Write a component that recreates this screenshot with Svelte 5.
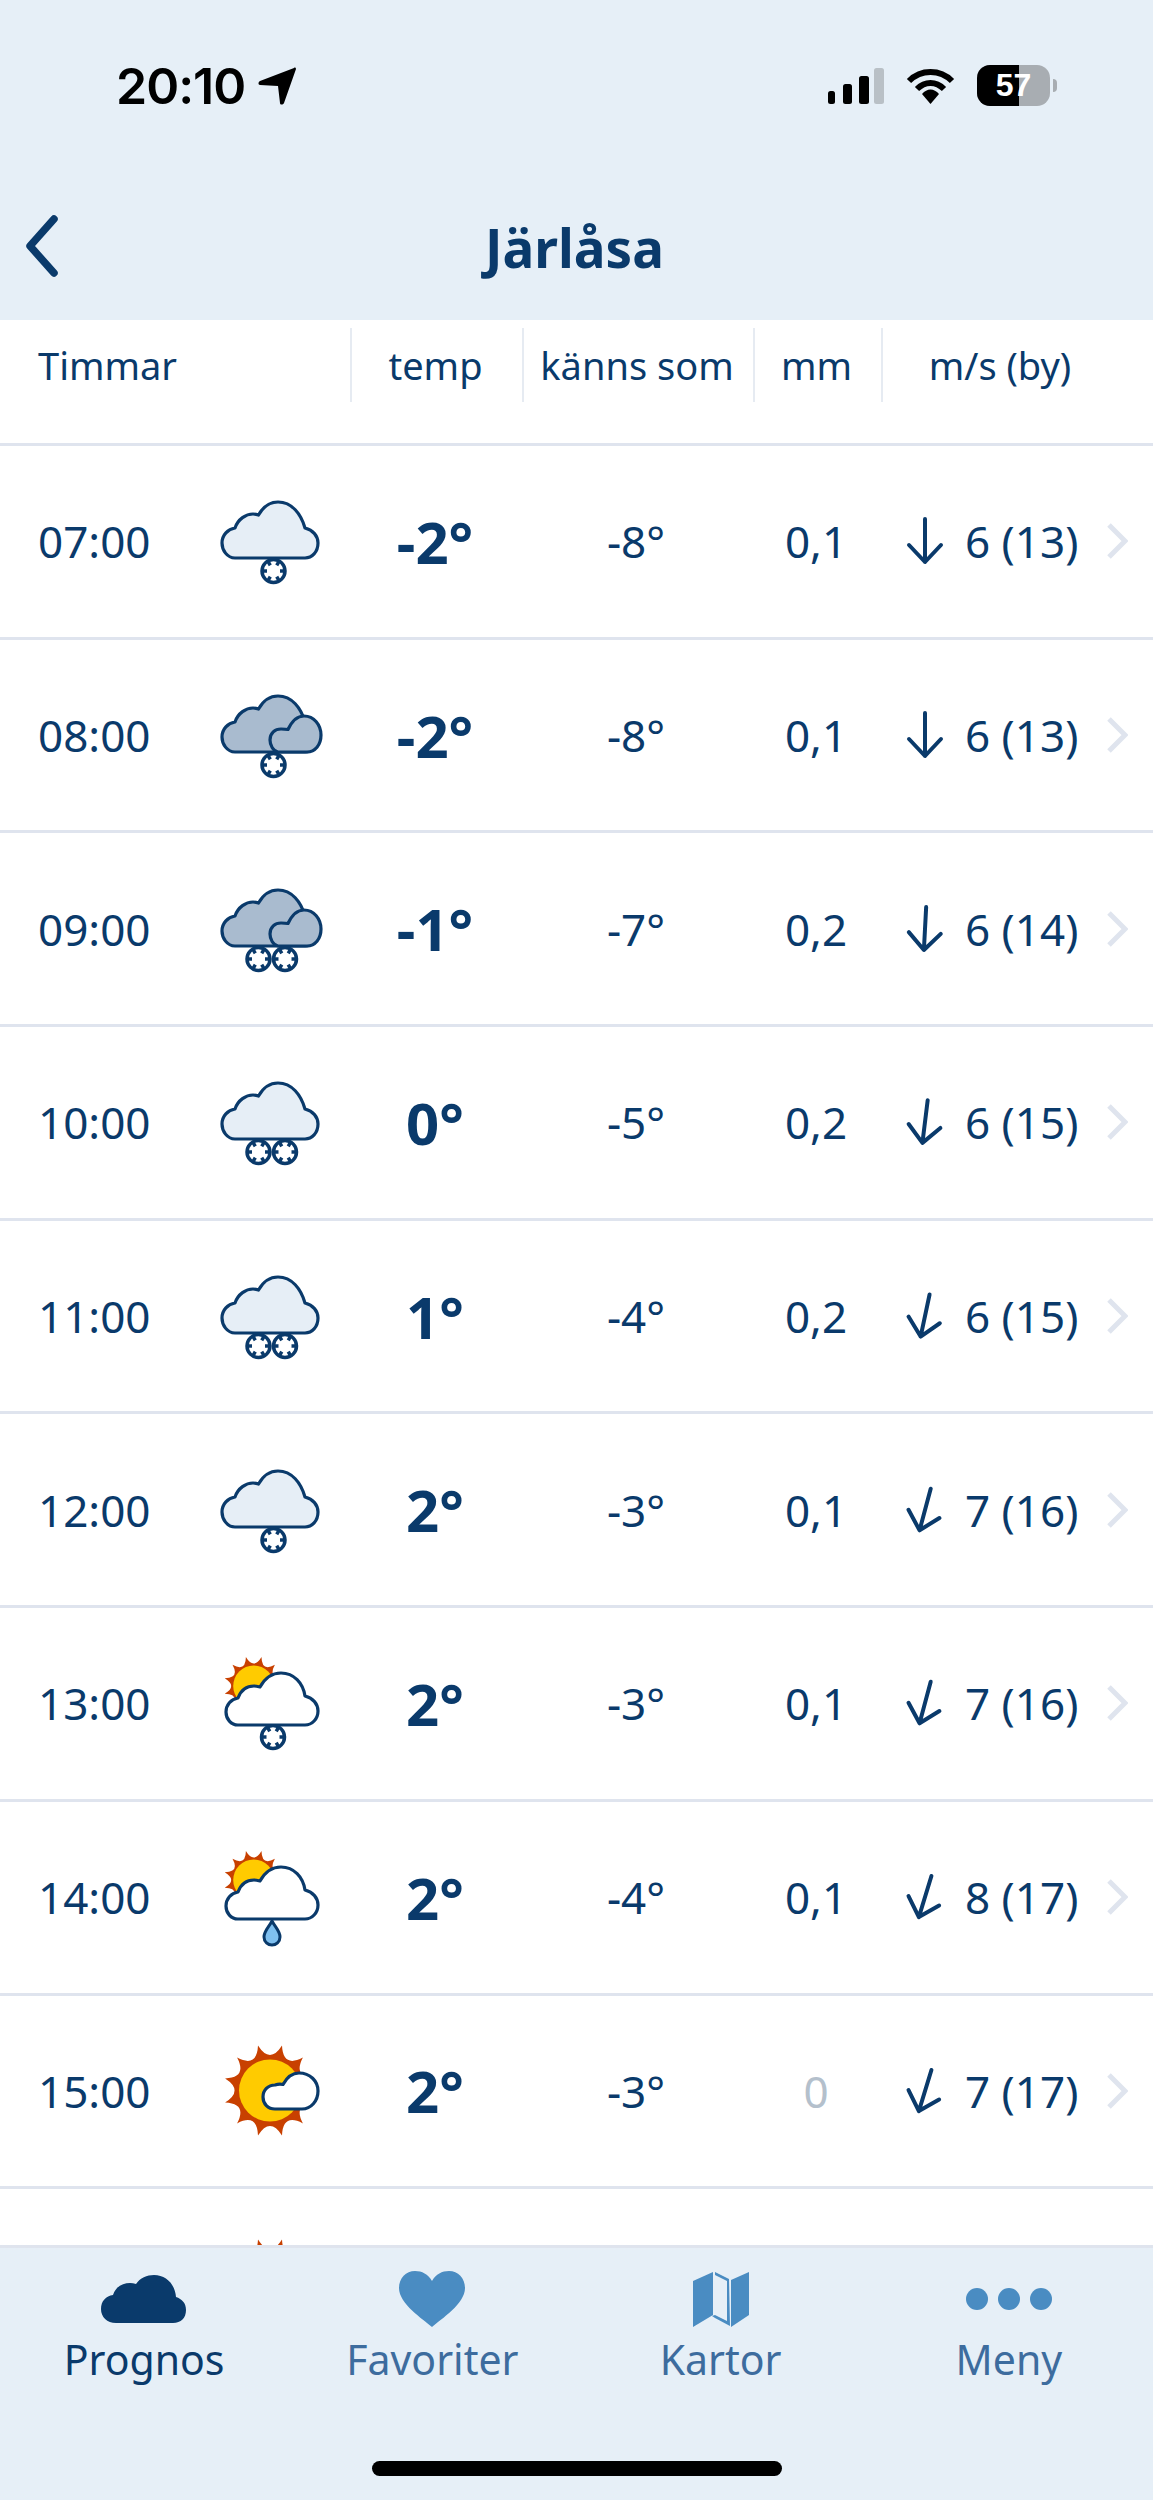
<script lang="ts">
  const hours = [
    { time: '07:00', icon: 'snow', temp: '-2°', feels: '-8°', mm: '0,1', dir: 0, wind: '6 (13)' },
    { time: '08:00', icon: 'darkSnow', temp: '-2°', feels: '-8°', mm: '0,1', dir: 0, wind: '6 (13)' },
    { time: '09:00', icon: 'darkSnow2', temp: '-1°', feels: '-7°', mm: '0,2', dir: 3, wind: '6 (14)' },
    { time: '10:00', icon: 'snow2', temp: '0°', feels: '-5°', mm: '0,2', dir: 7, wind: '6 (15)' },
    { time: '11:00', icon: 'snow2', temp: '1°', feels: '-4°', mm: '0,2', dir: 12, wind: '6 (15)' },
    { time: '12:00', icon: 'snow', temp: '2°', feels: '-3°', mm: '0,1', dir: 15, wind: '7 (16)' },
    { time: '13:00', icon: 'sunSnow', temp: '2°', feels: '-3°', mm: '0,1', dir: 15, wind: '7 (16)' },
    { time: '14:00', icon: 'sunRain', temp: '2°', feels: '-4°', mm: '0,1', dir: 17, wind: '8 (17)' },
    { time: '15:00', icon: 'sun', temp: '2°', feels: '-3°', mm: '0', dir: 17, wind: '7 (17)' },
    // only the top of this row's icon shows above the tab bar
    { time: '', icon: 'sun', temp: '', feels: '', mm: '', dir: 0, wind: '' },
  ];

  const tabs = ['Prognos', 'Favoriter', 'Kartor', 'Meny'];

  const bigCloud = 'M25 77C17 77 12 69 12 62C12 54 18 48 25 47C28 38 36 33 43 33C45 33 47 33.5 48.5 34C53 26 60 21 68 21C82 21 91 33 95 47C103 49 108 55 108 62C108 71 102 77 95 77Z';
  const frontCloud = 'M68 77C63 76 60 70 60 65C60 58 65 54 71 54C74 54 76 54 78 54.5C82 46 87 41 94 41C104 41 111 50 111 60C111 70 105 77 97 77Z';
  const flatCloud = 'M28 82C21 82 16 76 16 69C16 62 21 56 28 55C31 47 37 43 44 43C46 43 48 43.5 50 44C55 35 62 30 71 30C84 30 93 40 95 53C103 55 108 61 108 68C108 76 102 82 95 82Z';
  const smallCloud = 'M65 78C58 78 53 73 53 66C53 59 58 54 65 54C68 53 71 53 73 53.5C77 46 82 42 89 42C100 42 108 50 108 60C108 70 101 78 92 78Z';

  // sun outline with twelve concave rays
  function sunPath(cx: number, cy: number, outer: number, inner: number) {
    let d = '';
    for (let i = 0; i < 12; i++) {
      const a = ((15 + i * 30 - 90) * Math.PI) / 180;
      const m = a + Math.PI / 12;
      const tip = `${(cx + outer * Math.cos(a)).toFixed(1)} ${(cy + outer * Math.sin(a)).toFixed(1)}`;
      const ctl = `${(cx + inner * Math.cos(m)).toFixed(1)} ${(cy + inner * Math.sin(m)).toFixed(1)}`;
      const next = a + Math.PI / 6;
      const end = `${(cx + outer * Math.cos(next)).toFixed(1)} ${(cy + outer * Math.sin(next)).toFixed(1)}`;
      d += (i === 0 ? `M${tip}` : '') + `Q${ctl} ${end}`;
    }
    return d + 'Z';
  }

  const spokes = [0, 60, 120, 180, 240, 300];
</script>

{#snippet flake(x: number, y: number)}
  <circle cx={x} cy={y} r="11.5" fill="#fff" stroke="#0a3a6b" stroke-width="3.5" />
  {#each spokes as s}
    <line
      x1={x + 11 * Math.cos((s * Math.PI) / 180)}
      y1={y + 11 * Math.sin((s * Math.PI) / 180)}
      x2={x + 6.5 * Math.cos((s * Math.PI) / 180)}
      y2={y + 6.5 * Math.sin((s * Math.PI) / 180)}
      stroke="#0a3a6b"
      stroke-width="3.5"
    />
  {/each}
{/snippet}

{#snippet weather(icon: string)}
  <svg class="wx" viewBox="0 0 120 120" width="120" height="120" stroke-linejoin="round">
    {#if icon === 'snow' || icon === 'snow2'}
      {#if icon === 'snow'}
        {@render flake(63.5, 90)}
      {:else}
        {@render flake(48.5, 90)}
        {@render flake(75, 90)}
      {/if}
      <path d={bigCloud} fill="#e6eef6" stroke="#0a3a6b" stroke-width="3.2" />
    {:else if icon === 'darkSnow' || icon === 'darkSnow2'}
      {#if icon === 'darkSnow'}
        {@render flake(63.5, 90)}
      {:else}
        {@render flake(48.5, 90)}
        {@render flake(75, 90)}
      {/if}
      <path d={bigCloud} fill="#a9bbcf" stroke="#0a3a6b" stroke-width="3.2" />
      <path d={frontCloud} fill="#a9bbcf" stroke="#0a3a6b" stroke-width="3.2" />
    {:else if icon === 'sunSnow' || icon === 'sunRain'}
      <path d={sunPath(43.7, 43, 30, 16)} fill="#c84000" />
      <circle cx="43.7" cy="43" r="20.5" fill="#ffcb00" />
      {#if icon === 'sunSnow'}
        {@render flake(63, 94)}
      {:else}
        <path d="M62 84C59 90 54 94 54 100C54 105 58 108 62 108C66 108 70 105 70 100C70 94 65 90 62 84Z" fill="#7fc0f0" stroke="#0a3a6b" stroke-width="3" />
      {/if}
      <path d={flatCloud} fill="#fff" stroke="#0a3a6b" stroke-width="3.2" />
    {:else}
      <path d={sunPath(60, 59.5, 46.5, 26)} fill="#c84000" />
      <circle cx="60" cy="59.5" r="31" fill="#ffcb00" />
      <path d={smallCloud} fill="#fff" stroke="#0a3a6b" stroke-width="3.2" />
    {/if}
  </svg>
{/snippet}

<div class="phone">
  <header class="top">
    <div class="status">
      <div class="clock">
        <span>20:10</span>
        <svg viewBox="0 0 38 38" width="38" height="38"><path d="M36 1C37 0 38 1 38 2L26 36C25 38 22 38 22 36L20 19L2 18C0 18 0 15 2 14Z" fill="#000" /></svg>
      </div>
      <div class="indicators">
        <svg viewBox="0 0 56 36" width="56" height="36">
          <rect x="0" y="23" width="7" height="13" rx="2.5" fill="#000" />
          <rect x="15" y="16" width="9" height="20" rx="2.5" fill="#000" />
          <rect x="31" y="8" width="10" height="28" rx="2.5" fill="#000" />
          <rect x="46" y="0" width="10" height="36" rx="2.5" fill="#b9c0c6" />
        </svg>
        <svg viewBox="0 0 49 36" width="49" height="36">
          <path d="M3 13C15 1 34 1 46 13" fill="none" stroke="#000" stroke-width="6" />
          <path d="M11 21C19 13 30 13 38 21" fill="none" stroke="#000" stroke-width="6" />
          <path d="M16 26C21 20 28 20 33 26L24.500 36Z" fill="#000" />
        </svg>
        <div class="battery">
          <div class="cell"><span class="fill"></span><span class="pct">57</span></div>
          <span class="tip"></span>
        </div>
      </div>
    </div>
    <div class="nav">
      <svg class="back" viewBox="0 0 36 62" width="36" height="62"><path d="M31 4L7 31L31 58" fill="none" stroke="#0a3a6b" stroke-width="7.5" stroke-linecap="round" stroke-linejoin="round" /></svg>
      <h1>Järlåsa</h1>
    </div>
  </header>

  <div class="table-head">
    <span class="h-hours">Timmar</span>
    <span class="h-col">temp</span>
    <span class="h-col">känns som</span>
    <span class="h-col">mm</span>
    <span class="h-col">m/s (by)</span>
  </div>

  <div class="list">
    {#each hours as h}
      <div class="row">
        <span class="time">{h.time}</span>
        {@render weather(h.icon)}
        <span class="temp">{h.temp}</span>
        <span class="feels">{h.feels}</span>
        <span class="mm" class:none={h.mm === '0'}>{h.mm}</span>
        <div class="wind">
          {#if h.wind}
            <svg viewBox="0 0 50 60" width="50" height="60" style="transform: rotate({h.dir}deg)">
              <path d="M25 8V51M9 34L25 51L41 34" fill="none" stroke="#0a3a6b" stroke-width="4" stroke-linecap="round" stroke-linejoin="round" />
            </svg>
            <span class="speed">{h.wind}</span>
            <svg class="chev" viewBox="0 0 22 38" width="22" height="38"><path d="M3 3L19 19L3 35" fill="none" stroke="#dfe4ee" stroke-width="5" /></svg>
          {/if}
        </div>
      </div>
    {/each}
  </div>

  <nav class="tabs">
    {#each tabs as t, i}
      <div class="tab" class:active={i === 0}>
        <div class="tab-icon">
          {#if i === 0}
            <svg viewBox="0 0 86 50" width="86" height="50"><path d="M15 49C6 49 0 43 0 35C0 27 5 22 12 21C15 12 22 9 29 9C31 9 33 9.500 35 10C39 4 46 1 53 1C65 1 74 10 75 23C81 25 85 29 85 36C85 44 80 49 72 49Z" fill="#0a3a6b" /></svg>
          {:else if i === 1}
            <svg viewBox="0 0 66 56" width="66" height="56"><path d="M33 56C24 48 0 33 0 17C0 7 7 0 16 0C23 0 29 3 33 10C37 3 43 0 50 0C59 0 66 7 66 17C66 33 42 48 33 56Z" fill="#4a8cc2" /></svg>
          {:else if i === 2}
            <svg viewBox="0 0 56 56" width="56" height="56"><path d="M0 10L20 1V44L0 56ZM22 1L36 8L37 55L22 47L19 45L22 44L34 50V10L22 4ZM38 9L56 1V44L38 56Z" fill="#4a8cc2" /></svg>
          {:else}
            <svg viewBox="0 0 86 22" width="86" height="22">
              <circle cx="11" cy="11" r="11" fill="#4a8cc2" />
              <circle cx="43" cy="11" r="11" fill="#4a8cc2" />
              <circle cx="75" cy="11" r="11" fill="#4a8cc2" />
            </svg>
          {/if}
        </div>
        <span class="tab-label">{t}</span>
      </div>
    {/each}
    <span class="home-bar"></span>
  </nav>
</div>

<style>
  :global(body) {
    margin: 0;
    background: #fff;
  }

  .phone {
    width: 1153px;
    height: 2500px;
    display: flex;
    flex-direction: column;
    overflow: hidden;
    font-family: 'Noto Sans', 'Open Sans', sans-serif;
    color: #0a3a6b;
  }

  .top {
    height: 320px;
    flex-shrink: 0;
    background: #e6eff7;
  }

  .status {
    display: flex;
    justify-content: space-between;
    align-items: center;
    height: 41px;
    padding: 65px 96px 0 116px;
  }

  .clock {
    display: flex;
    align-items: center;
    gap: 13px;
    font-family: Inter, 'Liberation Sans', sans-serif;
    font-weight: 600;
    font-size: 50px;
    letter-spacing: -1px;
    color: #000;
  }

  .indicators {
    display: flex;
    align-items: center;
    gap: 22px;
  }

  .battery {
    display: flex;
    align-items: center;
    gap: 3px;
  }

  .cell {
    position: relative;
    width: 73px;
    height: 41px;
    border-radius: 13px;
    background: #a8adb2;
    overflow: hidden;
    display: flex;
    align-items: center;
    justify-content: center;
  }

  .fill {
    position: absolute;
    left: 0;
    top: 0;
    bottom: 0;
    width: 42px;
    background: #000;
  }

  .pct {
    position: relative;
    font-family: 'Liberation Sans', sans-serif;
    font-weight: 700;
    font-size: 32px;
    color: #fff;
  }

  .tip {
    width: 4px;
    height: 13px;
    border-radius: 0 4px 4px 0;
    background: #a8adb2;
  }

  .nav {
    position: relative;
    display: flex;
    justify-content: center;
    margin-top: 107px;
    padding-right: 4px;
  }

  .back {
    position: absolute;
    left: 23px;
    top: 2px;
  }

  h1 {
    margin: 0;
    font-size: 53px;
    font-weight: 700;
    line-height: 70px;
  }

  .table-head {
    height: 123px;
    flex-shrink: 0;
    box-sizing: border-box;
    display: grid;
    grid-template-columns: 350px 172px 231px 128px 1fr;
    align-items: start;
    padding-top: 8px;
    font-size: 38px;
    background: #fff;
  }

  .table-head span {
    height: 74px;
    display: flex;
    align-items: center;
    justify-content: center;
    padding-right: 3px;
  }

  .table-head .h-hours {
    justify-content: flex-start;
    padding-left: 38px;
  }

  .h-col {
    border-left: 2px solid #e6ebf2;
  }

  .table-head .h-col:last-child {
    padding-right: 36px;
  }

  .list {
    flex: 1;
    min-height: 0;
    overflow: hidden;
    background: #fff;
  }

  .row {
    height: 193.7px;
    box-sizing: border-box;
    border-top: 3px solid #dfe4ee;
    display: grid;
    grid-template-columns: 210px 120px 210px 192px 168px 1fr;
    align-items: center;
    font-size: 44px;
  }

  .time {
    padding-left: 38px;
  }

  .temp {
    text-align: center;
    font-size: 58px;
    font-weight: 700;
  }

  .feels,
  .mm {
    text-align: center;
  }

  .mm.none {
    color: #b4c0cc;
  }

  .wind {
    display: flex;
    align-items: center;
    padding-right: 25px;
  }

  .speed {
    margin-left: 15px;
  }

  .chev {
    margin-left: auto;
  }

  .tabs {
    position: relative;
    height: 255px;
    flex-shrink: 0;
    box-sizing: border-box;
    border-top: 3px solid #dfe4ee;
    background: #e6eff7;
    display: grid;
    grid-template-columns: repeat(4, 1fr);
    align-items: start;
  }

  .tab {
    display: flex;
    flex-direction: column;
    align-items: center;
    color: #3d6c9e;
  }

  .tab.active {
    color: #0a3a6b;
  }

  .tab-icon {
    height: 56px;
    margin-top: 23px;
    display: flex;
    align-items: center;
    justify-content: center;
  }

  .tab-label {
    font-size: 41px;
    line-height: 56px;
    margin-top: 4px;
  }

  .home-bar {
    position: absolute;
    left: 372px;
    bottom: 24px;
    width: 410px;
    height: 15px;
    border-radius: 8px;
    background: #000;
  }
</style>
